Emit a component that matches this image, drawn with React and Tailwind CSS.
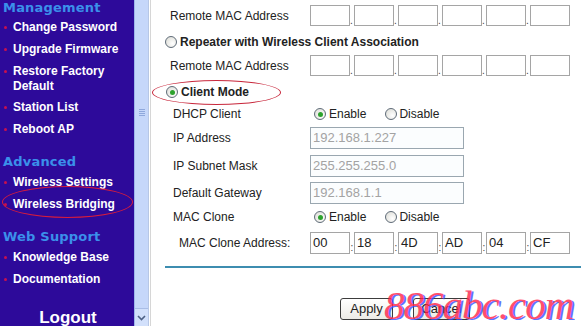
import React from "react";

function Bullet() {
  return <span className="absolute left-[4px] top-[6px] w-[3px] h-[3px] rounded-full bg-[#c8104e]" />;
}

function NavItem({ children, className = "" }) {
  return (
    <div className={"relative pl-[13px] text-white font-bold text-[12px] leading-[15px] " + className}>
      <Bullet />
      {children}
    </div>
  );
}

function NavHead({ children, className = "" }) {
  return (
    <div className={"pl-[3px] text-[#3b90ea] font-bold text-[13px] leading-[16px] font-['DejaVu_Sans',Verdana,sans-serif] tracking-[0.2px] " + className}>
      {children}
    </div>
  );
}

function Radio({ checked }) {
  return (
    <span className="w-[12px] h-[12px] rounded-full border border-[#5f6b78] bg-[radial-gradient(circle_at_65%_65%,#ffffff,#d9d9d2)] flex items-center justify-center shrink-0">
      {checked && <span className="w-[5px] h-[5px] rounded-full bg-[#2da22d]" />}
    </span>
  );
}

function EmptyBoxes() {
  return (
    <div className="flex items-end h-[21px]">
      {[0, 1, 2, 3, 4, 5].map((i) => (
        <React.Fragment key={i}>
          {i > 0 && <span className="w-[4px] text-[10px] leading-[10px] text-[#444]">.</span>}
          <div className="w-[40px] h-[21px] border border-[#a5a5a5] bg-white shrink-0" />
        </React.Fragment>
      ))}
    </div>
  );
}

function MacBoxes() {
  const v = ["00", "18", "4D", "AD", "04", "CF"];
  return (
    <div className="flex items-end h-[22px]">
      {v.map((t, i) => (
        <React.Fragment key={i}>
          {i > 0 && <span className="w-[4px] text-[10px] leading-[12px] text-[#444] text-center">:</span>}
          <div className="w-[40px] h-[22px] border border-[#a5a5a5] bg-white shrink-0 pl-[2px] text-[13px] leading-[20px] text-[#222]">
            {t}
          </div>
        </React.Fragment>
      ))}
    </div>
  );
}

function TextInput({ value }) {
  return (
    <div className="w-[154px] h-[22px] border border-[#9aa7b0] bg-[#fbfdfe] pl-[2px] text-[13px] leading-[20px] text-[#a3a3a3]">
      {value}
    </div>
  );
}

function EnableDisable() {
  return (
    <div className="flex items-center ml-[4px]">
      <Radio checked />
      <span className="ml-[3px]">Enable</span>
      <span className="ml-[19px]">
        <Radio />
      </span>
      <span className="ml-[2px]">Disable</span>
    </div>
  );
}

export default function App() {
  return (
    <div className="w-[581px] h-[326px] overflow-hidden relative flex bg-white font-['Liberation_Sans',Arial,sans-serif]">
      {/* Sidebar */}
      <div className="w-[134px] h-full bg-[#2d0a9a] shrink-0 flex flex-col">
        <NavHead className="mt-[0px]">Management</NavHead>
        <NavItem className="mt-[4px]">Change Password</NavItem>
        <NavItem className="mt-[7px]">Upgrade Firmware</NavItem>
        <NavItem className="mt-[7px] leading-[14px]">
          Restore Factory
          <br />
          Default
        </NavItem>
        <NavItem className="mt-[6px]">Station List</NavItem>
        <NavItem className="mt-[7px]">Reboot AP</NavItem>
        <NavHead className="mt-[17px]">Advanced</NavHead>
        <NavItem className="mt-[5px]">Wireless Settings</NavItem>
        <NavItem className="mt-[7px]">Wireless Bridging</NavItem>
        <NavHead className="mt-[17px]">Web Support</NavHead>
        <NavItem className="mt-[5px]">Knowledge Base</NavItem>
        <NavItem className="mt-[7px]">Documentation</NavItem>
        <div className="mt-[21px] text-center text-white font-bold text-[17px] leading-[20px] pl-[2px]">Logout</div>
      </div>

      {/* Scrollbar */}
      <div className="w-[15px] h-full shrink-0 flex flex-col border-l border-[#9fb6ea] border-r border-r-[#b7c7e6] bg-[#c6d7fa]">
        <div className="flex-1 flex flex-col items-center pt-[109px]">
          <div className="w-[6px] h-[1px] bg-[#8fa8dc]" />
          <div className="w-[6px] h-[1px] bg-[#8fa8dc] mt-[1px]" />
          <div className="w-[6px] h-[1px] bg-[#8fa8dc] mt-[1px]" />
          <div className="w-[6px] h-[1px] bg-[#8fa8dc] mt-[1px]" />
        </div>
        <div className="h-[18px] border-t border-[#a9bde6] bg-[#d2e0fb] flex items-center justify-center">
          <svg width="9" height="6" viewBox="0 0 9 6">
            <path d="M1 1 L4.5 4.5 L8 1" stroke="#4d6185" strokeWidth="1.6" fill="none" />
          </svg>
        </div>
      </div>
      <div className="w-[1px] h-full bg-white shrink-0" />
      <div className="w-[1px] h-full bg-[#d6d6d6] shrink-0" />

      {/* Content */}
      <div className="flex-1 h-full flex flex-col text-[12px] text-[#222]">
        <div className="mt-[5px] h-[21px] flex items-center">
          <div className="w-[159px] pl-[19px]">Remote MAC Address</div>
          <EmptyBoxes />
        </div>
        <div className="mt-[6px] h-[20px] flex items-center pl-[14px]">
          <Radio />
          <span className="ml-[3px] font-bold text-[12px]">Repeater with Wireless Client Association</span>
        </div>
        <div className="mt-[3px] h-[21px] flex items-center">
          <div className="w-[159px] pl-[19px]">Remote MAC Address</div>
          <EmptyBoxes />
        </div>
        <div className="mt-[6px] h-[20px] flex items-center pl-[15px]">
          <Radio checked />
          <span className="ml-[3px] font-bold text-[12px]">Client Mode</span>
        </div>
        <div className="mt-[2px] h-[20px] flex items-center">
          <div className="w-[159px] pl-[22px]">DHCP Client</div>
          <EnableDisable />
        </div>
        <div className="mt-[3px] h-[22px] flex items-center">
          <div className="w-[159px] pl-[22px]">IP Address</div>
          <TextInput value="192.168.1.227" />
        </div>
        <div className="mt-[6px] h-[22px] flex items-center">
          <div className="w-[159px] pl-[22px]">IP Subnet Mask</div>
          <TextInput value="255.255.255.0" />
        </div>
        <div className="mt-[5px] h-[22px] flex items-center">
          <div className="w-[159px] pl-[22px]">Default Gateway</div>
          <TextInput value="192.168.1.1" />
        </div>
        <div className="mt-[3px] h-[20px] flex items-center">
          <div className="w-[159px] pl-[22px]">MAC Clone</div>
          <EnableDisable />
        </div>
        <div className="mt-[5px] h-[22px] flex items-center">
          <div className="w-[159px] pl-[28px]">MAC Clone Address:</div>
          <MacBoxes />
        </div>
        <div className="mt-[12px] ml-[14px] h-[2px] bg-[#3d8db0]" />
        <div className="mt-[30px] flex ml-[189px]">
          <div className="w-[53px] h-[22px] rounded-[3px] border border-[#3c3c3c] bg-[linear-gradient(#ffffff,#ecebe6)] flex items-center justify-center text-[13px]">
            Apply
          </div>
          <div className="ml-[20px] w-[57px] h-[22px] rounded-[3px] border border-[#3c3c3c] bg-[linear-gradient(#ffffff,#ecebe6)] flex items-center justify-center text-[13px]">
            Cancel
          </div>
        </div>
      </div>

      {/* Red ellipses */}
      <div className="absolute left-[2px] top-[186px] w-[131px] h-[32px] rounded-[50%] border border-[#d81c3c]" />
      <div className="absolute left-[152px] top-[80px] w-[129px] h-[25px] rounded-[50%] border border-[#c8283c]" />

      {/* Watermark */}
      <div className="absolute left-[384px] top-[283px] text-[41px] leading-[44px] italic font-['Liberation_Serif',serif] text-[#ff2448] opacity-80 [text-shadow:2px_1px_0_#3850ff] tracking-[-1px]">
        886abc.com
      </div>
    </div>
  );
}
